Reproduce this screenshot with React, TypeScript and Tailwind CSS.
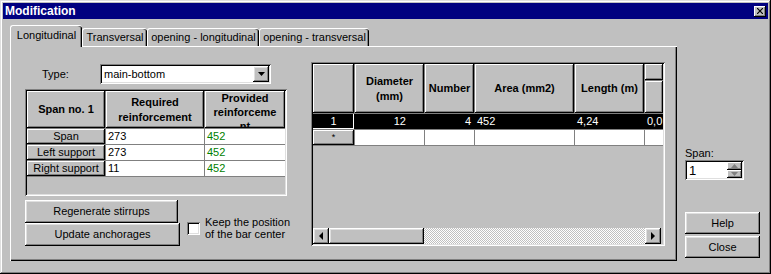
import React from "react";

// classic 3D borders
const raised =
  "shadow-[inset_-1px_-1px_0_#000,inset_1px_1px_0_#fff,inset_-2px_-2px_0_#808080,inset_2px_2px_0_#dfdfdf]";
const raisedCell = "shadow-[inset_-1px_-1px_0_#000,inset_1px_1px_0_#fff,inset_-2px_-2px_0_#808080]";
const sunken =
  "shadow-[inset_1px_1px_0_#808080,inset_-1px_-1px_0_#fff,inset_2px_2px_0_#000,inset_-2px_-2px_0_#dfdfdf]";

function Arrow({ dir, color = "#000" }: { dir: "left" | "right" | "down" | "up"; color?: string }) {
  const pts = {
    left: "4,0 0,4 4,8",
    right: "0,0 4,4 0,8",
    down: "0,0 7,0 3.5,4",
    up: "0,4 7,4 3.5,0",
  }[dir];
  const w = dir === "left" || dir === "right" ? 4 : 7;
  const h = dir === "left" || dir === "right" ? 8 : 4;
  return (
    <svg width={w} height={h} viewBox={`0 0 ${w} ${h}`}>
      <polygon points={pts} fill={color} />
    </svg>
  );
}

function Tab({ label, width, active }: { label: string; width: number; active?: boolean }) {
  if (active) {
    return (
      <div
        className="relative z-10 -mb-px flex h-[22px] items-start justify-center rounded-t-[3px] border-l border-t border-white bg-[#c0c0c0] pt-[3px] shadow-[inset_-1px_0_0_#000,inset_-2px_0_0_#808080]"
        style={{ width }}
      >
        {label}
      </div>
    );
  }
  return (
    <div
      className="flex h-[18px] items-start justify-center rounded-t-[3px] border-l border-t border-white pt-[2px] shadow-[inset_-1px_0_0_#000,inset_-2px_0_0_#808080]"
      style={{ width }}
    >
      {label}
    </div>
  );
}

function Button({ label, className }: { label: string; className: string }) {
  return <div className={`flex items-center justify-center ${raised} ${className}`}>{label}</div>;
}

const spanRows = [
  { name: "Span", req: "273", prov: "452" },
  { name: "Left support", req: "273", prov: "452" },
  { name: "Right support", req: "11", prov: "452" },
];

function SpanTable() {
  return (
    <div className={`mt-[5px] h-[107px] w-[262px] bg-[#c0c0c0] p-[2px] ${sunken}`}>
      <div className="flex w-fit flex-col gap-px bg-[#808080] pb-px">
        <div className="flex h-[37px] gap-px font-bold">
          <div className={`flex w-[78px] items-center justify-center bg-[#c0c0c0] ${raisedCell}`}>Span no. 1</div>
          <div className={`flex w-[98px] items-center justify-center bg-[#c0c0c0] text-center leading-[15px] ${raisedCell}`}>
            Required
            <br />
            reinforcement
          </div>
          <div className={`w-[80px] overflow-hidden bg-[#c0c0c0] text-center leading-[14px] ${raisedCell}`}>
            Provided
            <br />
            reinforceme
            <br />
            nt
          </div>
        </div>
        {spanRows.map((r) => (
          <div key={r.name} className="flex h-[15px] gap-px leading-[15px]">
            <div className={`w-[78px] bg-[#c0c0c0] text-center ${raisedCell}`}>{r.name}</div>
            <div className="w-[98px] bg-white pl-[2px]">{r.req}</div>
            <div className="w-[80px] bg-white pl-[2px] text-[#008000]">{r.prov}</div>
          </div>
        ))}
      </div>
    </div>
  );
}

function BarsGrid() {
  return (
    <div className={`ml-[24px] mt-[15px] h-[184px] w-[354px] bg-[#c0c0c0] p-[2px] ${sunken}`}>
      <div className="flex h-full flex-col">
        <div className="flex w-full flex-col gap-px overflow-hidden bg-[#808080] pb-px">
          {/* header */}
          <div className="flex h-[49px] gap-px font-bold leading-[15px]">
            <div className={`w-[41px] shrink-0 bg-[#c0c0c0] ${raisedCell}`} />
            <div className={`flex w-[69px] shrink-0 items-center justify-center bg-[#c0c0c0] text-center ${raisedCell}`}>
              Diameter
              <br />
              (mm)
            </div>
            <div className={`flex w-[49px] shrink-0 items-center justify-center bg-[#c0c0c0] ${raisedCell}`}>Number</div>
            <div className={`flex w-[99px] shrink-0 items-center justify-center bg-[#c0c0c0] ${raisedCell}`}>Area (mm2)</div>
            <div className={`flex w-[69px] shrink-0 items-center justify-center bg-[#c0c0c0] ${raisedCell}`}>Length (m)</div>
            <div className="flex min-w-0 flex-1 flex-col gap-px">
              <div className={`h-[16px] bg-[#c0c0c0] ${raisedCell}`} />
              <div className={`flex-1 bg-[#c0c0c0] ${raisedCell}`} />
            </div>
          </div>
          {/* selected row */}
          <div className="flex h-[15px] gap-px bg-black leading-[15px] text-white">
            <div className="w-[41px] shrink-0 bg-black text-center shadow-[inset_-1px_-1px_0_#fff]">1</div>
            <div className="w-[69px] shrink-0 pr-[18px] text-right">12</div>
            <div className="w-[49px] shrink-0 pr-[3px] text-right">4</div>
            <div className="w-[99px] shrink-0 pl-[2px]">452</div>
            <div className="w-[69px] shrink-0 pl-[2px]">4,24</div>
            <div className="min-w-0 flex-1 overflow-hidden whitespace-nowrap pl-[2px]">0,0</div>
          </div>
          {/* new row */}
          <div className="flex h-[15px] gap-px leading-[15px]">
            <div className={`w-[41px] shrink-0 bg-[#c0c0c0] text-center text-[9px] ${raisedCell}`}>*</div>
            <div className="w-[69px] shrink-0 bg-white" />
            <div className="w-[49px] shrink-0 bg-white" />
            <div className="w-[99px] shrink-0 bg-white" />
            <div className="w-[69px] shrink-0 bg-white" />
            <div className="min-w-0 flex-1 bg-white" />
          </div>
        </div>
        {/* horizontal scrollbar */}
        <div className="mt-auto flex h-[16px] w-[348px]">
          <div className={`flex w-[16px] items-center justify-center bg-[#c0c0c0] ${raised}`}>
            <Arrow dir="left" />
          </div>
          <div className={`w-[95px] bg-[#c0c0c0] ${raised}`} />
          <div className="flex-1 bg-[repeating-conic-gradient(#fff_0_25%,#c0c0c0_0_50%)] bg-[length:2px_2px]" />
          <div className={`flex w-[16px] items-center justify-center bg-[#c0c0c0] ${raised}`}>
            <Arrow dir="right" />
          </div>
        </div>
      </div>
    </div>
  );
}

export default function App() {
  return (
    <div
      className={`flex h-[274px] w-[771px] flex-col bg-[#c0c0c0] p-[3px] text-[11px] leading-[13px] text-black [font-family:'Liberation_Sans',Arial,sans-serif] shadow-[inset_-1px_-1px_0_#000,inset_1px_1px_0_#dfdfdf,inset_-2px_-2px_0_#808080,inset_2px_2px_0_#fff]`}
    >
      {/* Title bar */}
      <div className="flex h-[16px] items-center justify-between bg-[#000080] pl-[2px] pr-[2px]">
        <span className="text-[12px] font-bold text-white">Modification</span>
        <div className={`flex h-[11px] w-[12px] items-center justify-center bg-[#c0c0c0] ${raisedCell}`}>
          <svg width="6" height="6" viewBox="0 0 6 6">
            <path d="M0 0 L6 6 M6 0 L0 6" stroke="#000" strokeWidth="1.2" />
          </svg>
        </div>
      </div>

      <div className="flex flex-1 pt-[6px]">
        {/* Tabs + panel */}
        <div className="ml-[7px] flex flex-col">
          <div className="flex items-end">
            <Tab label="Longitudinal" width={72} active />
            <Tab label="Transversal" width={65} />
            <Tab label="opening - longitudinal" width={112} />
            <Tab label="opening - transversal" width={110} />
          </div>
          <div className="flex h-[215px] w-[667px] items-start border-l border-t border-white shadow-[inset_-1px_-1px_0_#000,inset_-2px_-2px_0_#808080]">
            {/* left column */}
            <div className="ml-[14px] mt-[17px] flex w-[262px] flex-col">
              <div className="flex h-[20px] items-center">
                <span className="ml-[17px] w-[58px]">Type:</span>
                <div className={`flex h-[20px] w-[171px] items-center bg-white p-[2px] ${sunken}`}>
                  <span className="flex-1 pl-[2px]">main-bottom</span>
                  <div className={`flex h-[16px] w-[16px] items-center justify-center bg-[#c0c0c0] ${raised}`}>
                    <Arrow dir="down" />
                  </div>
                </div>
              </div>
              <SpanTable />
              <div className="mt-[4px] flex items-start">
                <div className="flex shrink-0 flex-col">
                  <Button label="Regenerate stirrups" className="h-[23px] w-[153px]" />
                  <Button label="Update anchorages" className="h-[23px] w-[155px]" />
                </div>
                <div className="ml-[7px] mt-[16px] flex shrink-0 items-center leading-[12px]">
                  <div className={`h-[13px] w-[13px] shrink-0 bg-white ${sunken}`} />
                  <span className="ml-[5px] whitespace-nowrap">
                    Keep the position
                    <br />
                    of the bar center
                  </span>
                </div>
              </div>
            </div>
            <BarsGrid />
          </div>
        </div>

        {/* right column */}
        <div className="ml-[8px] flex w-[75px] flex-col pt-[122px]">
          <span className="leading-[12px]">Span:</span>
          <div className={`mt-[1px] flex h-[20px] w-[59px] items-center bg-white p-[2px] ${sunken}`}>
            <span className="flex-1 pl-[2px] text-[13px]">1</span>
            <div className="flex h-full w-[15px] flex-col">
              <div className={`flex flex-1 items-center justify-center bg-[#c0c0c0] ${raisedCell}`}>
                <Arrow dir="up" color="#808080" />
              </div>
              <div className={`flex flex-1 items-center justify-center bg-[#c0c0c0] ${raisedCell}`}>
                <Arrow dir="down" color="#808080" />
              </div>
            </div>
          </div>
          <Button label="Help" className="mt-[32px] h-[22px] w-[75px]" />
          <Button label="Close" className="mt-[2px] h-[22px] w-[75px]" />
        </div>
      </div>
    </div>
  );
}
